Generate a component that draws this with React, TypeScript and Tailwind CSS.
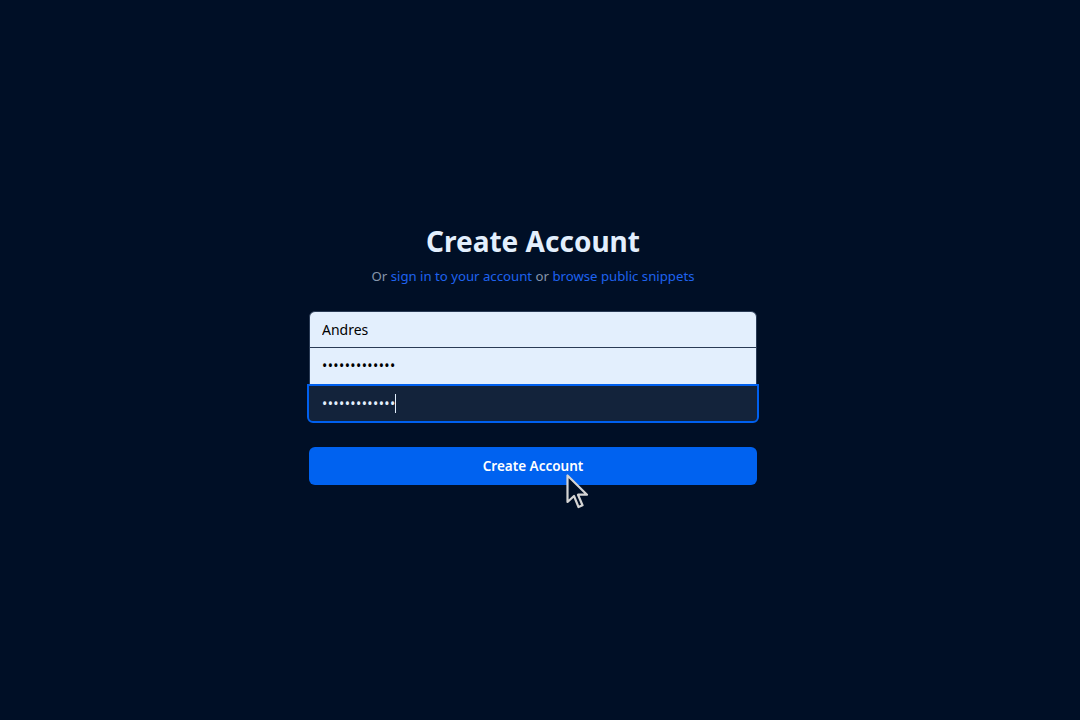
import { useState } from "react";

export default function App() {
  const [form, setForm] = useState({ username: "Andres", password: "secretpass123", confirm: "secretpass123" });

  const handleChange = (e: React.ChangeEvent<HTMLInputElement>) => {
    setForm({ ...form, [e.target.name]: e.target.value });
  };

  return (
    <div
      className="relative flex min-h-screen items-center justify-center bg-[#000f26] pr-[14px] pb-[12px]"
      style={{ fontFamily: '"Segoe UI", "Noto Sans", sans-serif' }}
    >
      <div className="flex w-[448px] flex-col items-center">
        <h1 className="text-[28px] font-bold leading-9 text-[#e3effd]">Create Account</h1>
        <p className="mt-2 text-[13.2px] text-[#8796ab]">
          Or <a className="text-[#1f63ef]">sign in to your account</a> or{" "}
          <a className="text-[#1f63ef]">browse public snippets</a>
        </p>

        <form className="mt-6 flex w-full flex-col" onSubmit={(e) => e.preventDefault()}>
          <input
            name="username"
            value={form.username}
            onChange={handleChange}
            className="h-[37px] w-full rounded-t-md border border-[#2a3b55] bg-[#e3effd] px-3 text-sm text-black outline-none"
          />
          <input
            type="password"
            name="password"
            value={form.password}
            onChange={handleChange}
            className="h-[37px] w-full border border-t-0 border-[#2a3b55] bg-[#e3effd] px-3 text-sm tracking-[0.4px] text-black outline-none"
          />
          <div className="relative -mx-[2px] -mt-[1px]">
            <input
              type="password"
              name="confirm"
              value={form.confirm}
              onChange={handleChange}
              className="h-[39px] w-full rounded-b-md border-2 border-[#0060ef] bg-[#13233b] px-[13px] text-sm tracking-[0.4px] text-[#e3effd] outline-none caret-[#e3effd]"
            />
            {/* text caret */}
            <span className="pointer-events-none absolute left-[88px] top-[10px] h-[19px] w-px bg-[#e3effd]" />
          </div>

          <button
            type="submit"
            className="mt-6 h-[38px] w-full rounded-md bg-[#0062f0] text-[13.5px] font-semibold text-white"
          >
            Create Account
          </button>
        </form>
      </div>

      {/* mouse pointer */}
      <svg
        className="pointer-events-none absolute left-[566px] top-[474px]"
        width="24"
        height="36"
        viewBox="0 0 24 36"
      >
        <path
          d="M1.5 1.5 L1.5 28 L8 22 L12.5 33 L16.5 31.3 L12 20.7 L21 20.7 Z"
          fill="#000f26"
          stroke="#d4d4d4"
          strokeWidth="2.2"
          strokeLinejoin="round"
        />
      </svg>
    </div>
  );
}
